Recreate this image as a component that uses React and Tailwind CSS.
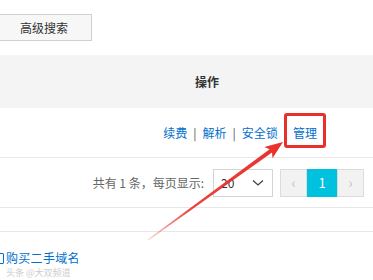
import React from "react";

const font = { fontFamily: '"Microsoft YaHei","Noto Sans CJK SC","Liberation Sans",sans-serif' };

export default function App() {
  return (
    <div className="relative w-[373px] h-[280px] overflow-hidden bg-white" style={font}>
      <div className="pt-[14px]">
        <div className="ml-[-4px] w-[96px] h-[27px] border border-[#d0d0d0] bg-[#f7f7f7] flex items-center justify-center text-[12px] text-[#333]">
          高级搜索
        </div>
      </div>
      <div className="mt-[14px] h-[53px] bg-[#f4f4f4] flex items-center pl-[195px] text-[12px] font-bold text-[#333]">
        操作
      </div>
      <div className="h-[50px] border-b border-[#e8e8e8] flex items-center justify-end pr-[56px] text-[12px] text-[#0070cc]">
        <span>续费</span>
        <span className="mx-[6px] text-[#555]">|</span>
        <span>解析</span>
        <span className="mx-[6px] text-[#555]">|</span>
        <span>安全锁</span>
        <span className="mx-[6px] text-[#555]">|</span>
        <span>管理</span>
      </div>
      <div className="h-[50px] border-b border-[#e8e8e8] flex items-center justify-end pr-[9px] text-[12px] text-[#666]">
        <span>共有 1 条，每页显示:</span>
        <div className="ml-[9px] w-[60px] h-[28px] border border-[#d4d4d4] flex items-center justify-between pl-[7px] pr-[8px] text-[#333]">
          <span>20</span>
          <svg width="12" height="8" viewBox="0 0 12 8" fill="none">
            <path d="M1 1.5 L6 6 L11 1.5" stroke="#444" strokeWidth="1.3" />
          </svg>
        </div>
        <div className="ml-[7px] flex h-[28px]">
          <div className="w-[27px] h-full border border-[#dcdcdc] bg-[#f2f2f2] flex items-center justify-center text-[#c0c0c0] text-[14px]">‹</div>
          <div className="w-[30px] h-full bg-[#00c1de] flex items-center justify-center text-white text-[13px]">1</div>
          <div className="w-[27px] h-full border border-[#dcdcdc] bg-[#f2f2f2] flex items-center justify-center text-[#c0c0c0] text-[14px]">›</div>
        </div>
      </div>
      <div className="h-[24px] border-b border-[#e8e8e8]" />
      <div className="mt-[20px] flex items-center text-[12px] text-[#0070cc] leading-none tracking-[0.3px]">
        <span className="ml-[-6px] mr-[2px] w-[10px] h-[11px] border-[1.5px] border-[#0070cc] rounded-[1px]" />
        <span>购买二手域名</span>
      </div>
      <div className="mt-[4px] ml-[6px] text-[9px] leading-none text-[#cccccc]">头条 @大双频道</div>

      <div className="absolute left-[284px] top-[113px] w-[42px] h-[35px] border-[3px] border-[#e8302a] rounded-[3px]" />
      <svg className="absolute left-0 top-0" width="373" height="280" viewBox="0 0 373 280">
        <defs>
          <linearGradient id="ag" x1="148" y1="240" x2="284" y2="141" gradientUnits="userSpaceOnUse">
            <stop offset="0" stopColor="#e8302a" stopOpacity="0.2" />
            <stop offset="0.3" stopColor="#e8302a" stopOpacity="0.9" />
            <stop offset="1" stopColor="#e8302a" />
          </linearGradient>
        </defs>
        <polygon
          points="148.3,240.4 272,152.4 272.5,158.3 283,142 264.3,146.9 269.6,149.2 147.7,239.6"
          fill="url(#ag)"
        />
      </svg>
    </div>
  );
}
